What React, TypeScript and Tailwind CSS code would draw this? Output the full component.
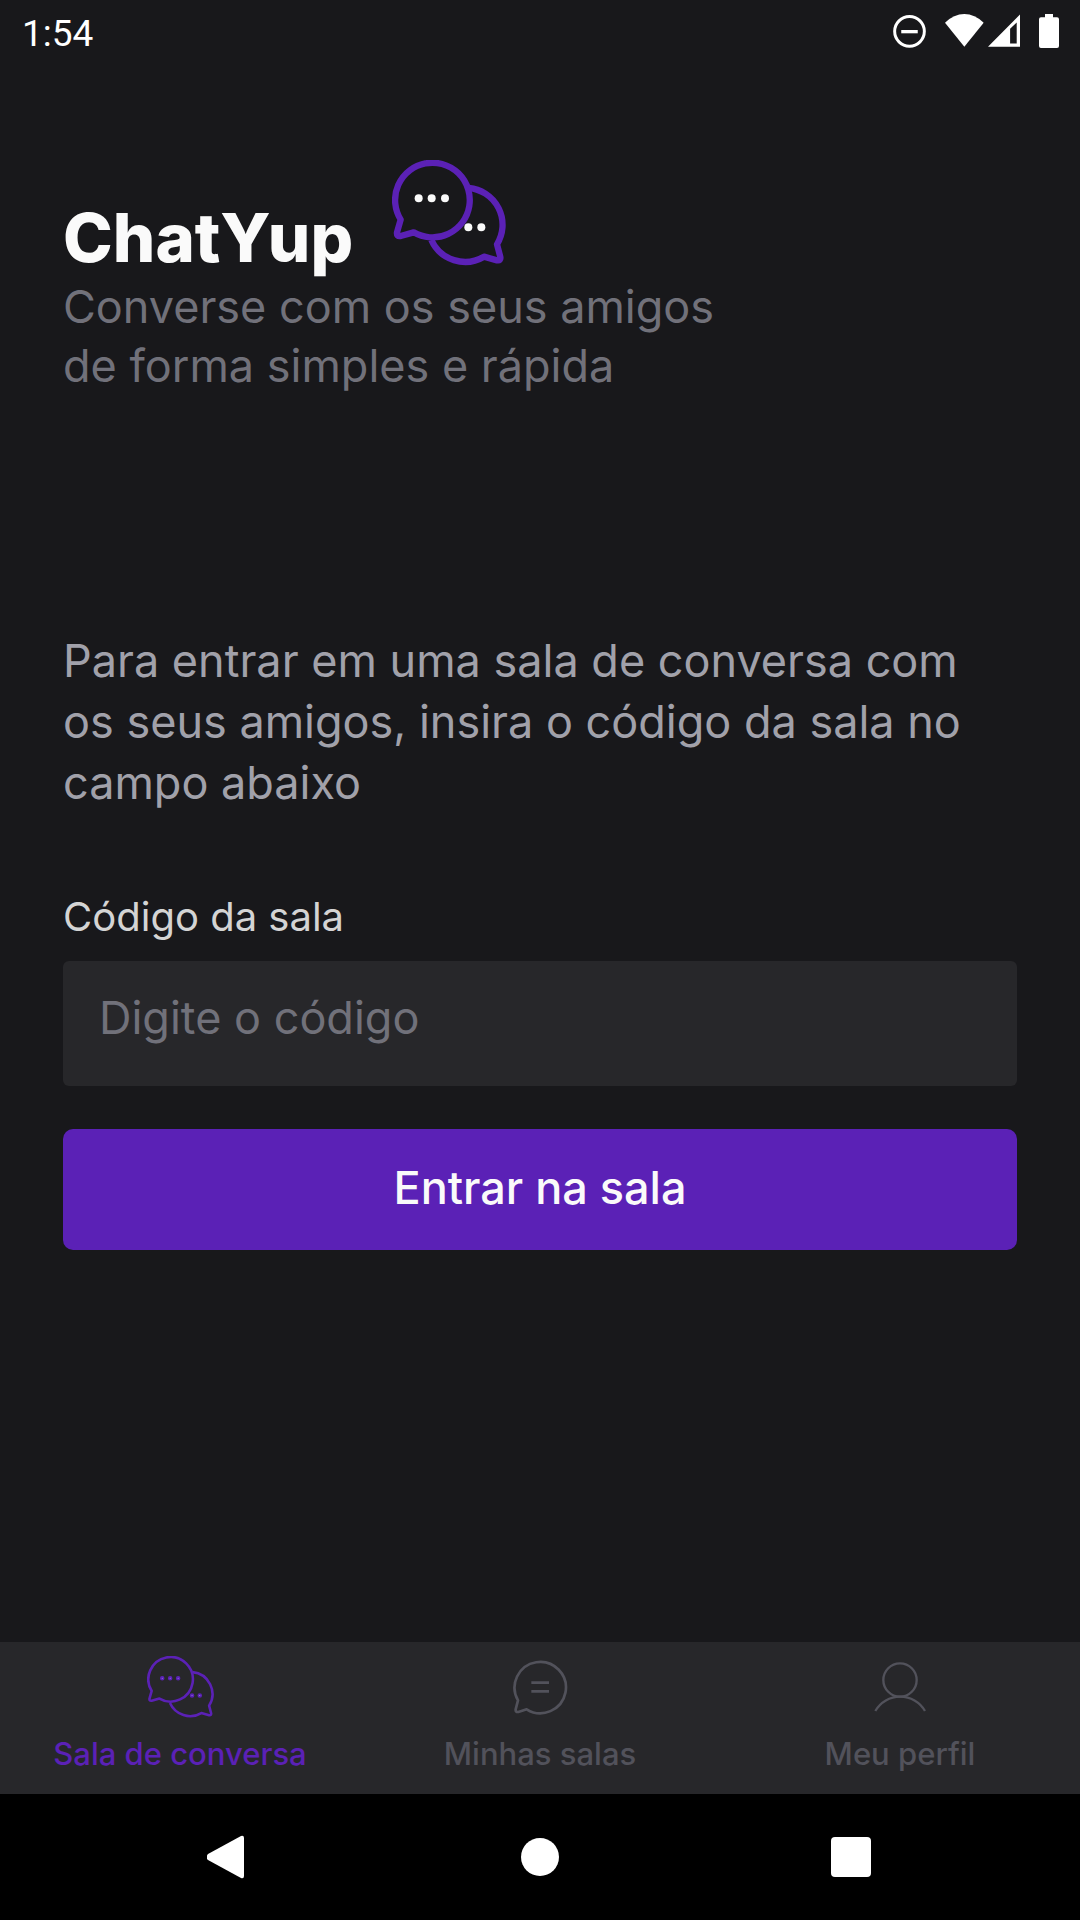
import { useState } from "react";
import type { ReactNode } from "react";

const FRONT_BUBBLE =
  "M92 238 A112 112 0 1 1 131 276 L92 287 Q79 289 81 276 Z";
const BACK_BUBBLE =
  "M297 143 A111 111 0 0 1 381 312 L391 350 Q393 362 381 360 L342 349 A111 111 0 0 1 184 299";

function Logo() {
  return (
    <svg viewBox="66 59 342 318" className="h-[106px] w-[114px]" fill="none" aria-hidden="true">
      <g stroke="#5b21b6" strokeWidth="19" strokeLinejoin="round">
        <path d={FRONT_BUBBLE} />
        <path d={BACK_BUBBLE} />
      </g>
      <g fill="#fafafa">
        <circle cx="146" cy="174" r="12" />
        <circle cx="185" cy="174" r="12" />
        <circle cx="225" cy="174" r="12" />
        <circle cx="295" cy="261" r="12" />
        <circle cx="334" cy="261" r="12" />
      </g>
    </svg>
  );
}

function ChatsIcon() {
  return (
    <svg viewBox="69 62 336 312" className="h-[62px] w-[67px]" fill="none" aria-hidden="true">
      <g stroke="currentColor" strokeWidth="13" strokeLinejoin="round">
        <path d={FRONT_BUBBLE} />
        <path d={BACK_BUBBLE} />
      </g>
      <g fill="#c4b5fd" stroke="currentColor" strokeWidth="9">
        <circle cx="145" cy="174" r="7" />
        <circle cx="185" cy="174" r="7" />
        <circle cx="225" cy="174" r="7" />
        <circle cx="295" cy="261" r="7" />
        <circle cx="334" cy="261" r="7" />
      </g>
    </svg>
  );
}

function RoomIcon() {
  return (
    <svg viewBox="276 88 168 168" className="size-14" fill="none" stroke="currentColor" strokeWidth="8" strokeLinejoin="round" aria-hidden="true">
      <path d="M294 212 A77 77 0 1 1 320 239 L295 247 Q286 248 287 239 Z" />
      <path d="M334 159 H387 M334 185 H387" />
    </svg>
  );
}

function ProfileIcon() {
  return (
    <svg viewBox="222 96 156 150" className="h-[50px] w-[52px]" fill="none" stroke="currentColor" strokeWidth="7" aria-hidden="true">
      <circle cx="300" cy="150" r="50" />
      <path d="M226 243 A86 86 0 0 1 375 243" />
    </svg>
  );
}

function StatusBar() {
  return (
    <header className="flex h-[63px] items-center justify-between pr-[21px] pl-[22px]">
      <time className="pt-1 font-['Roboto',sans-serif] text-[37px] text-white">1:54</time>
      <div className="flex items-center pb-px text-white">
        <svg viewBox="98 42 100 102" className="mr-[19px] h-[34px] w-[33px]" aria-hidden="true">
          <circle cx="148" cy="94" r="45" fill="none" stroke="currentColor" strokeWidth="9" />
          <path d="M123 90 H173 V100 H123 Z" fill="currentColor" />
        </svg>
        <svg viewBox="256 42 117 102" className="mr-1 h-[34px] w-[39px]" aria-hidden="true">
          <path d="M256 68 Q283 42 314 42 Q345 42 372 68 L314 140 Z" fill="currentColor" />
        </svg>
        <svg viewBox="383 42 97 102" className="mr-[19px] h-[34px] w-8" aria-hidden="true">
          <path d="M383 141 L480 43 V141 Z M450 86 V131 H470 V67 Z" fill="currentColor" fillRule="evenodd" />
        </svg>
        <svg viewBox="537 42 60 102" className="h-[34px] w-5" aria-hidden="true">
          <path d="M555 42 H579 V52 H591 Q597 52 597 58 V138 Q597 144 591 144 H543 Q537 144 537 138 V58 Q537 52 543 52 H555 Z" fill="currentColor" />
        </svg>
      </div>
    </header>
  );
}

function Tab({ icon, label, active }: { icon: ReactNode; label: string; active?: boolean }) {
  return (
    <a
      href="#"
      aria-current={active ? "page" : undefined}
      className={`flex flex-col items-center pt-[13px] ${active ? "text-[#5b21b6]" : "text-[#52525b]"}`}
    >
      <span className="flex h-16 items-center">{icon}</span>
      <span className="mt-[15px] text-[31px] leading-10 font-medium whitespace-nowrap">{label}</span>
    </a>
  );
}

function SystemNav() {
  return (
    <div className="grid h-[126px] grid-cols-3 place-items-center bg-black px-[73px] text-white">
      <button type="button" aria-label="Voltar">
        <svg viewBox="0 0 44 44" className="size-11" fill="currentColor" aria-hidden="true">
          <path d="M1 19 L34 1 Q37 0 37 3 V41 Q37 44 34 43 L1 25 Q-2 22 1 19 Z" />
        </svg>
      </button>
      <button type="button" aria-label="Início">
        <svg viewBox="0 0 44 44" className="size-11" fill="currentColor" aria-hidden="true">
          <circle cx="22" cy="22" r="19" />
        </svg>
      </button>
      <button type="button" aria-label="Recentes">
        <svg viewBox="0 0 44 44" className="size-11" fill="currentColor" aria-hidden="true">
          <rect x="2" y="2" width="40" height="40" rx="4" />
        </svg>
      </button>
    </div>
  );
}

export default function App() {
  const [code, setCode] = useState("");

  return (
    <div className="flex min-h-screen flex-col bg-[#18181b] font-['Inter',sans-serif]">
      <StatusBar />
      <main className="flex-1 px-[63px] pt-[97px]">
        <div className="flex items-end gap-[39px]">
          <h1 className="text-[67px] leading-[56px] font-extrabold text-[#fafafa]">ChatYup</h1>
          <Logo />
        </div>
        <p className="mt-[11px] text-[45px] leading-[59px] text-[#71717a]">
          Converse com os seus amigos
          <br />
          de forma simples e rápida
        </p>
        <p className="mt-[235px] text-[45px] leading-[61px] text-[#a1a1aa]">
          Para entrar em uma sala de conversa com
          <br />
          os seus amigos, insira o código da sala no
          <br />
          campo abaixo
        </p>
        <form className="mt-[76px] flex flex-col" onSubmit={(event) => event.preventDefault()}>
          <label htmlFor="room-code" className="text-[40px] leading-[56px] text-[#d4d4d4]">
            Código da sala
          </label>
          <input
            id="room-code"
            type="text"
            value={code}
            onChange={(event) => setCode(event.target.value)}
            placeholder="Digite o código"
            className="mt-4 h-[125px] rounded-md bg-[#27272a] px-9 pb-3 text-[45px] text-[#fafafa] outline-none placeholder:text-[#71717a]"
          />
          <button
            type="submit"
            className="mt-[43px] h-[121px] rounded-[10px] bg-[#5b21b6] pb-1 text-[45px] font-medium text-[#fafafa]"
          >
            Entrar na sala
          </button>
        </form>
      </main>
      <nav className="grid h-[152px] grid-cols-3 bg-[#27272a]">
        <Tab icon={<ChatsIcon />} label="Sala de conversa" active />
        <Tab icon={<RoomIcon />} label="Minhas salas" />
        <Tab icon={<ProfileIcon />} label="Meu perfil" />
      </nav>
      <SystemNav />
    </div>
  );
}
